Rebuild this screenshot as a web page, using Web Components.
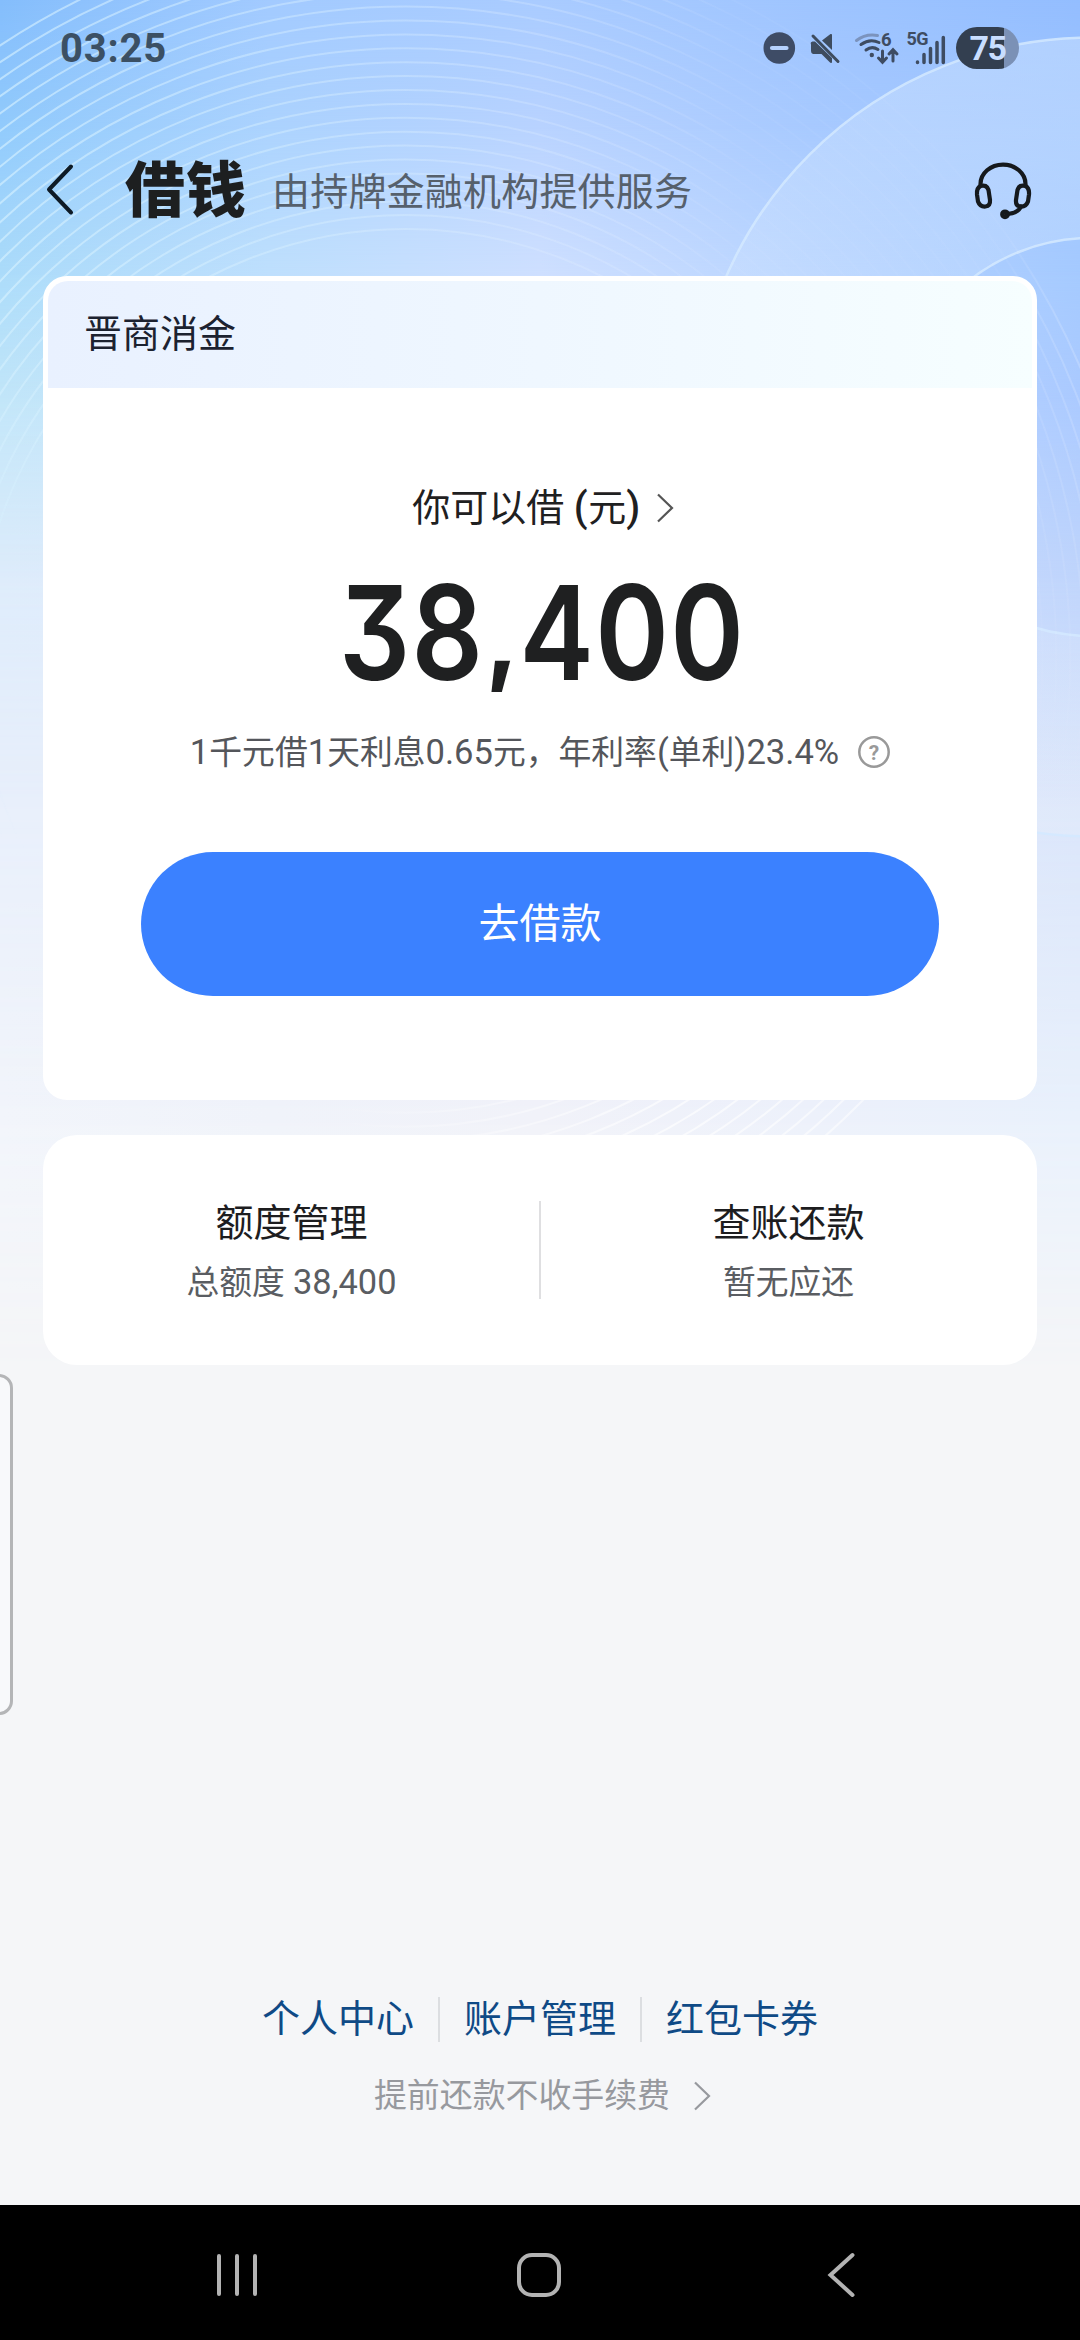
<!DOCTYPE html>
<html lang="zh-CN">
<head>
<meta charset="utf-8">
<title>借钱</title>
<style>
html,body{margin:0;padding:0}
body{width:1080px;height:2340px;overflow:hidden;background:#f5f6f8;font-family:Roboto,"Noto Sans CJK SC",sans-serif;color:#1f2021}
</style>
</head>
<body>
<loan-app></loan-app>
<script>
const define = (name, html, init) => customElements.define(name, class extends HTMLElement {
  constructor() {
    super();
    const t = document.createElement('template');
    t.innerHTML = html;
    this.attachShadow({ mode: 'open' }).appendChild(t.content.cloneNode(true));
    if (init) init(this.shadowRoot, this);
  }
});

/* Soft colour field: rows of horizontal gradients, each fading into the next one */
define('page-backdrop', `
<style>
:host{display:block;position:absolute;inset:0;z-index:0;overflow:hidden}
.row{position:absolute;left:0;top:0;width:1080px;height:1400px}
svg{position:absolute;left:0;top:0}
</style>
<div id="field"></div>
<svg width="1080" height="1400" viewBox="0 0 1080 1400" fill="none">
  <defs>
    <linearGradient id="line" gradientUnits="userSpaceOnUse" x1="0" y1="0" x2="1080" y2="0">
      <stop offset="0" stop-color="#d8f2ff" stop-opacity=".62"/>
      <stop offset=".25" stop-color="#d8f0ff" stop-opacity=".45"/>
      <stop offset=".5" stop-color="#e4f2ff" stop-opacity=".25"/>
      <stop offset=".68" stop-color="#fff" stop-opacity=".04"/>
      <stop offset=".93" stop-color="#fff" stop-opacity=".04"/>
      <stop offset="1" stop-color="#fff" stop-opacity=".22"/>
    </linearGradient>
    <linearGradient id="low" gradientUnits="userSpaceOnUse" x1="330" y1="0" x2="900" y2="0">
      <stop offset="0" stop-color="#fff" stop-opacity="0"/>
      <stop offset=".6" stop-color="#fff" stop-opacity=".65"/>
      <stop offset="1" stop-color="#fff" stop-opacity=".5"/>
    </linearGradient>
    <linearGradient id="fade" x1="0" y1="0" x2="0" y2="1000" gradientUnits="userSpaceOnUse">
      <stop offset=".3" stop-color="#fff"/><stop offset=".62" stop-color="#555"/><stop offset=".85" stop-color="#000"/>
    </linearGradient>
    <mask id="up" maskUnits="userSpaceOnUse" x="0" y="0" width="1080" height="1000"><rect width="1080" height="1000" fill="url(#fade)"/></mask>
    <clipPath id="down"><rect y="1095" width="1080" height="60"/></clipPath>
    <linearGradient id="ring" gradientUnits="userSpaceOnUse" x1="0" y1="38" x2="0" y2="836">
      <stop offset="0" stop-color="#d6e8ff" stop-opacity=".42"/><stop offset=".4" stop-color="#d6e8ff" stop-opacity=".2"/><stop offset="1" stop-color="#fff" stop-opacity=".12"/>
    </linearGradient>
  </defs>
  <path fill="url(#ring)" fill-rule="evenodd" d="M1092 38a399 399 0 1 0 .1 0zM1092 238a199 199 0 1 0 .1 0z"/>
  <circle cx="1092" cy="437" r="399.500" stroke="#d4e9ff" stroke-opacity=".85" stroke-width="2.500"/>
  <circle cx="1092" cy="437" r="199" stroke="#d4e9ff" stroke-opacity=".85" stroke-width="2.500"/>
  <g id="upper" mask="url(#up)" stroke="url(#line)" stroke-width="2"></g>
  <g id="lower" clip-path="url(#down)" stroke="url(#low)" stroke-width="2"></g>
</svg>`, root => {
  const rows = [
    [0,    ['#84bdfc', '#a2caff', '#a9cbff', '#9ec4ff', '#93bdff']],
    [130,  ['#92cbfc', '#acd3fe', '#b9d3ff', '#a8caff', '#a0c6ff']],
    [276,  ['#acdcfa', '#bfe0fd', '#cfe0ff', '#b9d5ff', '#a5caff']],
    [400,  ['#c2e6f9', '#c8e4fb', '#d0e2ff', '#c0d8ff', '#abcaff']],
    [580,  ['#deecfb', '#dfeafc', '#dce7fd', '#cddefe', '#c0d5fc']],
    [800,  ['#e8effb', '#e8effb', '#e8eefb', '#e0e9fb', '#dae5fa']],
    [1115, ['#f2f5fb', '#f0f3fa', '#f1f2f9', '#edf1fb', '#e9f1fc']],
    [1370, ['#f5f6f8', '#f5f6f8', '#f5f6f8', '#f5f6f8', '#f5f6f8']]
  ];
  const field = root.getElementById('field');
  for (let i = rows.length - 1; i >= 0; i--) {
    const d = document.createElement('div');
    d.className = 'row';
    d.style.background = `linear-gradient(90deg,${rows[i][1].join(',')})`;
    if (rows[i + 1]) d.style.webkitMaskImage = d.style.maskImage =
      `linear-gradient(180deg,#000 ${rows[i][0]}px,transparent ${rows[i + 1][0]}px)`;
    field.appendChild(d);
  }
  const NS = 'http://www.w3.org/2000/svg';
  for (const [id, max] of [['upper', 740], ['lower', 640]]) {
    for (let r = 428; r < max; r += 13.9) {
      const c = document.createElementNS(NS, 'circle');
      c.setAttribute('cx', 406); c.setAttribute('cy', 657); c.setAttribute('r', r);
      root.getElementById(id).appendChild(c);
    }
  }
});

define('status-bar', `
<style>
:host{display:flex;height:96px;box-sizing:border-box;padding:0 61px 0 60px;justify-content:space-between;align-items:center;color:#3b5064}
.time{font-size:40px;font-weight:700;line-height:48px;letter-spacing:.8px;padding-top:1px}
.icons{display:flex;align-items:center}
.battery{display:flex;width:63px;height:42px;border-radius:21px;background:linear-gradient(90deg,#333f50 48px,#7b91b6 48px);justify-content:center;align-items:center;color:#c9deff;font-size:34px;font-weight:700;letter-spacing:-1.500px;line-height:42px}
svg{display:block}
</style>
<div class="time">03:25</div>
<div class="icons">
<svg width="193" height="42" viewBox="763 27 193 42" fill="none" stroke-linecap="round">
  <circle cx="779.300" cy="48" r="15.800" fill="#3e4c66"/>
  <path d="M772 48h14.500" stroke="#b5d2ff" stroke-width="4.200"/>
  <g fill="#3e4c5f"><path d="M811 44.500q-1-2.500 1.500-3h2.500L832 58v4.500q-1 1-2.500-.500L821.500 54H813q-2-.500-2-3z"/><path d="M822 40.500l8.500-6.500q1.500-.500 1.500 1V50z"/></g>
  <path d="M813 36l25 25.500" stroke="#3e4c5f" stroke-width="3"/>
  <path d="M856.500 40.500q9-7 21-5" stroke="#7b93bd" stroke-width="3"/>
  <path d="M861 44.500q9-6.500 18-2M866 50q6-4.500 12-.500" stroke="#3e4c62" stroke-width="3"/>
  <circle cx="871.800" cy="55" r="2.200" fill="#3e4c62"/>
  <path d="M882.500 51v11M878.500 58l4 4.300 4-4.300M893 61V50M889 54l4-4.300 4 4.300" stroke="#3e4c62" stroke-width="3"/>
  <text x="881" y="46" font-size="18.500" font-weight="700" font-family="Roboto" fill="#3e4c62">6</text>
  <text x="906.500" y="45" font-size="18" font-weight="700" font-family="Roboto" fill="#3e4c62" letter-spacing="-.5">5G</text>
  <path d="M917.500 62.500v-.500M924 62.500v-8M930.500 62.500v-14M937 62.500v-20M943.300 62.500v-25" stroke="#3e4c62" stroke-width="3.500"/>
</svg>
<div class="battery">75</div>
</div>`);

define('page-header', `
<style>
:host{display:flex;height:180px;box-sizing:border-box;padding:0 47px 0 44px;align-items:center}
svg{display:block;flex:none}
h1{margin:0 0 0 49px;font-size:60px;line-height:80px;font-weight:900;letter-spacing:1px;font-family:"Noto Sans CJK SC",sans-serif;color:#1d1f20}
p{margin:11px auto 0 25px;font-size:38px;line-height:54px;color:#56606c;letter-spacing:.2px}
</style>
<svg style="margin-top:5px" width="32" height="56" viewBox="44 160 32 56" fill="none"><path d="M71 165.500L49 188.500l22 23" stroke="#0e1b26" stroke-width="4" stroke-linecap="round" stroke-linejoin="round"/></svg>
<h1>借钱</h1>
<p>由持牌金融机构提供服务</p>
<svg style="margin-top:9px" width="60" height="60" viewBox="973 161 60 60" fill="none" stroke="#15191d" stroke-width="4.200" stroke-linecap="round">
  <path d="M980.500 185.500v-1.500a22 19 0 0 1 45 0v1.500"/>
  <path d="M980.500 186q6-2 8 4l1.500 10q.5 6-4.500 6.500-5.500.5-7.500-5l-1-7q-.5-6.500 3.500-8.500z"/>
  <path d="M1025.500 186q-6-2-8 4l-1.500 10q-.5 6 4.500 6.500 5.500.5 7.500-5l1-7q.5-6.500-3.500-8.500z"/>
  <path d="M1021 206.500q-3 7-15 7.500"/><circle cx="1005" cy="214.300" r="2.800"/>
</svg>`);

define('chevron-right', `
<style>:host{display:block;width:18px;height:30px;color:#555}svg{display:block}</style>
<svg width="18" height="30" viewBox="0 0 18 30" fill="none"><path d="M2 1.500L16 15 2 28.500" stroke="currentColor" stroke-width="2.200"/></svg>`);

define('primary-button', `
<style>
:host{display:block}
button{display:flex;width:798px;height:144px;border:0;border-radius:72px;background:#3b81ff;color:#fff;font:400 41px/60px Roboto,"Noto Sans CJK SC",sans-serif;align-items:center;justify-content:center;padding:0}
</style>
<button><slot></slot></button>`);

define('credit-card', `
<style>
:host{display:flex;flex-direction:column;height:824px;box-sizing:border-box;margin:0 43px;padding:5px;border-radius:24px;background:#fff}
.lender{height:107px;box-sizing:border-box;padding:0 36px 8px;display:flex;align-items:center;border-radius:20px 20px 0 0;background:linear-gradient(90deg,#e9f1ff,#eff7ff 50%,#f6feff);font-size:38px;color:#1c2230}
.body{flex:1;display:flex;flex-direction:column;align-items:center}
.label{display:flex;align-items:center;gap:15px;margin:93px 0 0 6px;height:54px;font-size:38px;line-height:54px}
.label b{font-weight:500;font-size:40px;letter-spacing:.6px}
.amount{margin:28px 0 0 4px;height:140px;line-height:140px;font-family:Inter,Roboto,sans-serif;font-weight:600;font-size:131px;font-feature-settings:"cv09";letter-spacing:1.500px;transform:scaleX(.853);white-space:nowrap}
.amount span{font-size:96px;font-weight:900;line-height:1;vertical-align:8px;padding:0 1px 0 3px}
.rate{display:flex;align-items:center;gap:19px;margin-top:26px;height:46px;line-height:46px;font-size:32.800px;color:#54565b}
.rate b{font-weight:400;font-size:34.600px}
svg{display:block}
primary-button{margin-top:77px}
</style>
<div class="lender">晋商消金</div>
<div class="body">
  <div class="label"><span>你可以借 <b>(</b>元<b>)</b></span><chevron-right></chevron-right></div>
  <div class="amount">38<span>,</span>400</div>
  <div class="rate"><span><b>1</b>千元借<b>1</b>天利息<b>0.65</b>元，年利率<b>(</b>单利<b>)23.4%</b></span>
    <svg width="32" height="32" viewBox="0 0 32 32"><circle cx="16" cy="16" r="14.700" fill="none" stroke="#999" stroke-width="2.500"/><text x="16" y="23.500" text-anchor="middle" font-size="21" font-weight="700" font-family="Roboto" fill="#999">?</text></svg>
  </div>
  <primary-button>去借款</primary-button>
</div>`);

define('quota-item', `
<style>
:host{flex:1;display:flex;flex-direction:column;align-items:center}
.t{font-size:38px;line-height:54px;color:#1d1d1f}
.s{font-size:32.800px;line-height:46px;height:46px;color:#5a5d62;margin-top:10px}
::slotted(b){font-weight:400;font-size:34.400px;line-height:1}
</style>
<div class="t"><slot name="title"></slot></div><div class="s"><slot></slot></div>`);

define('quota-panel', `
<style>
:host{display:flex;height:230px;box-sizing:border-box;margin:35px 43px 0;padding-top:61px;border-radius:34px;background:#fff}
i{width:2px;height:98px;background:#dfdfe1;margin:5px -1px 0}
</style>
<quota-item><span slot="title">额度管理</span>总额度 <b>38,400</b></quota-item><i></i>
<quota-item><span slot="title">查账还款</span>暂无应还</quota-item>`);

define('page-footer', `
<style>
:host{display:flex;flex-direction:column;align-items:center;margin-top:auto;height:216px}
nav{display:flex;align-items:center;height:60px;font-size:38px;line-height:54px;color:#0f4a86}
nav i{width:2px;height:45px;background:#dcdee1;margin:0 24px}
.tip{display:flex;align-items:center;gap:23px;height:46px;margin:24px 0 0 5px;font-size:32.900px;line-height:46px;color:#97999e}
.tip chevron-right{color:#97999e}
</style>
<nav><span>个人中心</span><i></i><span>账户管理</span><i></i><span>红包卡券</span></nav>
<div class="tip"><span>提前还款不收手续费</span><chevron-right></chevron-right></div>`);

define('system-nav', `
<style>
:host{display:flex;height:135px;box-sizing:border-box;background:#000;align-items:center;justify-content:space-between;padding:5px 221px 0 213px}
svg{display:block}
.home{margin-right:9px}
</style>
<svg width="48" height="48" viewBox="0 0 48 48" stroke="#b3b3b3" stroke-width="4" stroke-linecap="round"><path d="M6 5v38M24 5v38M42 5v38"/></svg>
<svg class="home" width="48" height="48" viewBox="0 0 48 48" fill="none" stroke="#b3b3b3" stroke-width="4"><rect x="4" y="4" width="40" height="40" rx="13"/></svg>
<svg width="34" height="48" viewBox="0 0 34 48" fill="none" stroke="#b3b3b3" stroke-width="4" stroke-linecap="round"><path d="M27.500 4L5.500 24l22 20"/></svg>`);

/* Edge-panel grip that floats over the page at the left screen edge */
define('edge-handle', `
<style>:host{display:block;position:absolute;left:-20px;top:1374px;width:33px;height:341px;box-sizing:border-box;border:3px solid #b4b5b7;border-radius:14px;background:#f8f9fb;z-index:2}</style>`);

define('loan-app', `
<style>
:host{display:block;position:relative;width:1080px;height:2340px}
main{position:relative;z-index:1;display:flex;flex-direction:column;height:2340px}
</style>
<page-backdrop></page-backdrop>
<main>
  <status-bar></status-bar>
  <page-header></page-header>
  <credit-card></credit-card>
  <quota-panel></quota-panel>
  <page-footer></page-footer>
  <system-nav></system-nav>
</main>
<edge-handle></edge-handle>`);
</script>
</body>
</html>
